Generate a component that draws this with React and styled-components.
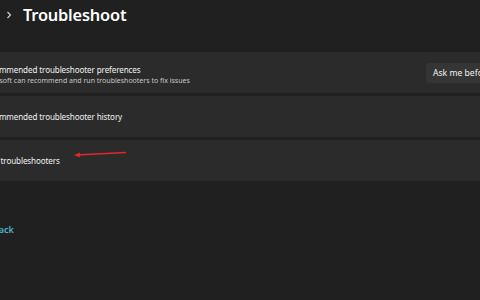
import React from "react";
import styled, { createGlobalStyle } from "styled-components";

const Global = createGlobalStyle`
  html, body { margin: 0; padding: 0; background: #202020; }
  body { width: 480px; height: 300px; overflow: hidden; font-family: "Noto Sans", "Open Sans", sans-serif; }
  #root { width: 480px; height: 300px; overflow: hidden; }
`;

const Page = styled.div`
  width: 620px;
  margin-left: -40px;
  display: flex;
  flex-direction: column;
`;

const Header = styled.div`
  display: flex;
  align-items: center;
  gap: 11px;
  height: 28px;
  padding-left: 46px;
`;

const Chevron = styled.svg`
  width: 6px;
  height: 8px;
  margin-top: 1px;
`;

const Title = styled.h1`
  margin: 0;
  font-size: 16.4px;
  font-weight: 600;
  color: #ffffff;
  letter-spacing: -0.2px;
`;

const List = styled.div`
  margin-top: 24px;
  display: flex;
  flex-direction: column;
  gap: 3px;
`;

const Card = styled.div`
  height: 41px;
  background: #2b2b2b;
  border-radius: 4px;
  display: flex;
  align-items: center;
  justify-content: space-between;
  padding-left: ${(p) => p.$pad}px;
  padding-right: 44px;
  position: relative;
`;

const Texts = styled.div`
  display: flex;
  flex-direction: column;
  gap: 1px;
  padding-top: 4px;
`;

const CardTitle = styled.div`
  font-size: 8.1px;
  color: #f0f0f0;
  line-height: 11px;
  letter-spacing: -0.12px;
`;

const CardSub = styled.div`
  font-size: 7px;
  color: #c8c8c8;
  line-height: 10px;
`;

const Button = styled.div`
  height: 20px;
  width: 110px;
  flex: none;
  background: #353535;
  border-radius: 4px;
  color: #f2f2f2;
  font-size: 8.6px;
  display: flex;
  align-items: center;
  padding-left: 7px;
  box-sizing: border-box;
  margin-top: 1px;
`;

const Arrow = styled.svg`
  position: absolute;
  left: 113px;
  top: 7px;
  width: 54px;
  height: 12px;
`;

const Feedback = styled.a`
  margin-top: 42px;
  margin-left: -8px;
  font-size: 9px;
  font-weight: 600;
  color: #52b2c9;
  text-decoration: none;
`;

export default function App() {
  return (
    <>
      <Global />
      <Page>
        <Header>
          <Chevron viewBox="0 0 6 8">
            <path d="M1.5 1 L4.5 4 L1.5 7" stroke="#cfcfcf" strokeWidth="1.2" fill="none" />
          </Chevron>
          <Title>Troubleshoot</Title>
        </Header>
        <List>
          <Card $pad={21}>
            <Texts>
              <CardTitle>Recommended troubleshooter preferences</CardTitle>
              <CardSub>Microsoft can recommend and run troubleshooters to fix issues</CardSub>
            </Texts>
            <Button>Ask me before running</Button>
          </Card>
          <Card $pad={21}>
            <CardTitle>Recommended troubleshooter history</CardTitle>
          </Card>
          <Card $pad={17}>
            <CardTitle>Other troubleshooters</CardTitle>
            <Arrow viewBox="0 0 54 12">
              <path d="M3 8 L53 5.5" stroke="#e0282a" strokeWidth="1.4" fill="none" />
              <path d="M1 8.1 L7 5.4 L6.8 10.4 Z" fill="#e0282a" />
            </Arrow>
          </Card>
        </List>
        <Feedback href="#">Give feedback</Feedback>
      </Page>
    </>
  );
}
